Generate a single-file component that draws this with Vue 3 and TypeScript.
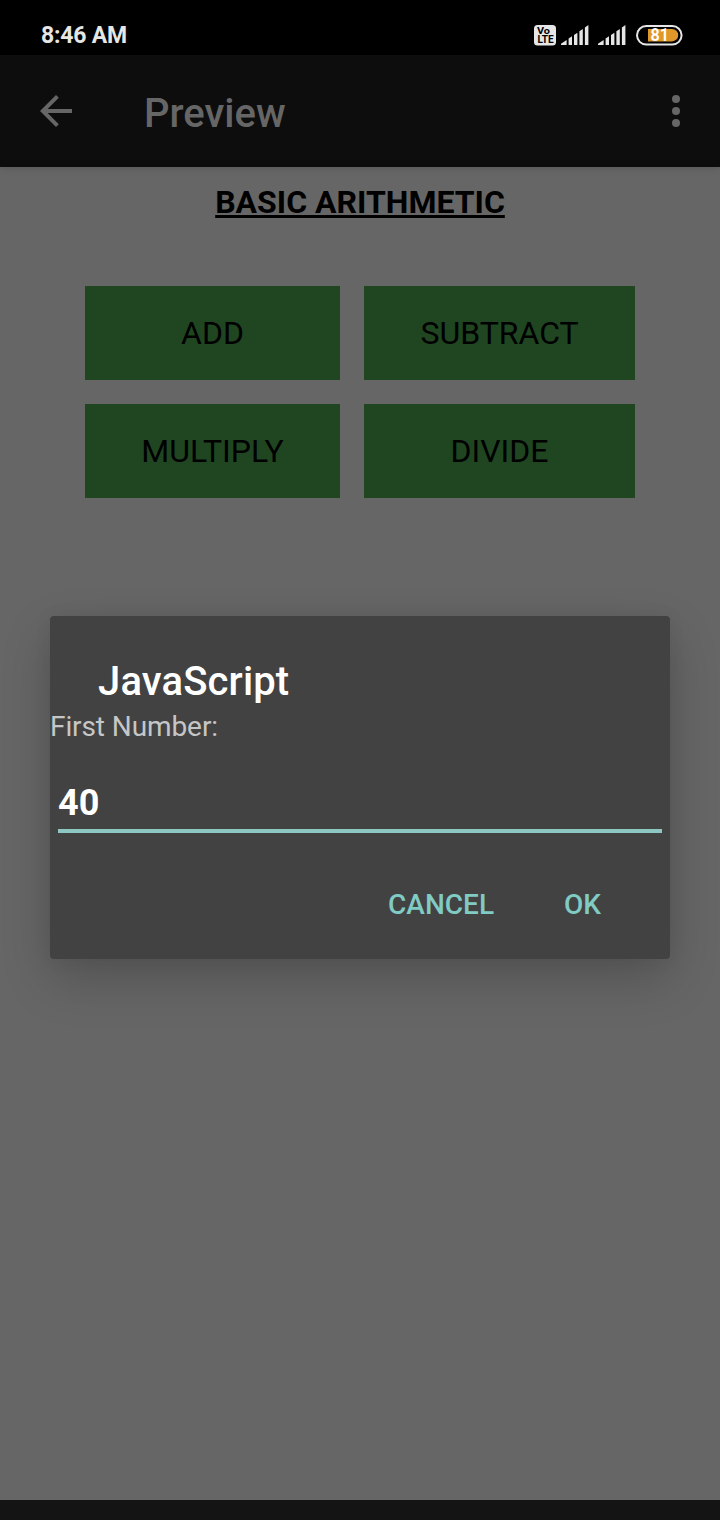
<script setup lang="ts">
import { ref } from 'vue'

const operations: string[] = ['ADD', 'SUBTRACT', 'MULTIPLY', 'DIVIDE']
const firstNumber = ref<string>('40')
const signalBars: string[] = [
  'M0 20V18.8L5.6 15V20Z',
  'M7.6 20V13.6L11 11.3V20Z',
  'M13 20V10L16.4 7.7V20Z',
  'M18.4 20V6.2L21.8 3.9V20Z',
  'M23.9 20V2.4L27.4 0V20Z',
]
</script>

<template>
  <div class="screen">
    <header class="status">
      <span class="time">8:46 AM</span>
      <div class="indicators">
        <svg class="volte" width="22" height="21" viewBox="0 0 22 21">
          <rect width="22" height="20.5" rx="3.5" fill="#e6e6e6" />
          <text x="3" y="9.2" font-size="9" textLength="13" lengthAdjust="spacingAndGlyphs">Vo</text>
          <text x="3.4" y="18.4" font-size="10" textLength="16.2" lengthAdjust="spacingAndGlyphs">LTE</text>
        </svg>
        <svg v-for="n in 2" :key="n" class="signal" width="28" height="20" viewBox="0 0 28 20">
          <path v-for="bar in signalBars" :key="bar" :d="bar" fill="#e6e6e6" />
        </svg>
        <svg class="battery" width="47" height="22" viewBox="0 0 47 22">
          <rect x="1" y="2" width="44.6" height="18.6" rx="9.3" fill="none" stroke="#e6e6e6" stroke-width="2" />
          <path d="M12 5H36a6.2 6.2 0 0 1 0 12.4H12Z" fill="#e0982a" />
          <text x="14.5" y="17.4" font-size="18" textLength="18.5" lengthAdjust="spacingAndGlyphs">81</text>
        </svg>
      </div>
    </header>

    <nav class="appbar">
      <svg class="back" width="32" height="32" viewBox="4 4 16 16">
        <path d="M20 11H7.83l5.59-5.59L12 4l-8 8 8 8 1.41-1.41L7.83 13H20v-2z" fill="#666" />
      </svg>
      <span class="title">Preview</span>
      <svg class="more" width="8" height="32" viewBox="0 0 8 32">
        <circle cx="4" cy="4" r="4" fill="#666" />
        <circle cx="4" cy="16" r="4" fill="#666" />
        <circle cx="4" cy="28" r="4" fill="#666" />
      </svg>
    </nav>

    <main class="page">
      <h1 class="heading">BASIC ARITHMETIC</h1>
      <div class="operations">
        <button v-for="name in operations" :key="name" class="operation">{{ name }}</button>
      </div>
    </main>

    <footer class="navbar"></footer>

    <section class="dialog">
      <h2 class="dialog-title">JavaScript</h2>
      <label class="message" for="prompt-value">First Number:</label>
      <input id="prompt-value" v-model="firstNumber" class="field" type="text" />
      <div class="actions">
        <button class="action">CANCEL</button>
        <button class="action">OK</button>
      </div>
    </section>
  </div>
</template>

<style>
body {
  margin: 0;
  background: #666;
}
</style>

<style scoped>
.screen {
  position: relative;
  display: flex;
  flex-direction: column;
  width: 720px;
  height: 1520px;
  overflow: hidden;
  background: #666;
  font-family: Roboto, "Liberation Sans", sans-serif;
}
button {
  margin: 0;
  border: 0;
  font-family: inherit;
}
.status {
  display: flex;
  justify-content: space-between;
  height: 55px;
  flex: none;
  box-sizing: border-box;
  padding: 21px 37px 0 41px;
  background: #000;
}
.time {
  margin-top: 1px;
  font-size: 23px;
  font-weight: 700;
  letter-spacing: -0.2px;
  line-height: 28px;
  color: #e6e6e6;
}
.indicators {
  display: flex;
  align-items: flex-start;
  padding-top: 4px;
}
.volte {
  font-weight: 700;
  fill: #000;
  margin-right: 5px;
}
.signal {
  margin-right: 9px;
}
.signal + .battery {
  margin-left: 1px;
}
.battery {
  font-weight: 600;
  fill: #fff;
  margin-top: -1px;
}
.appbar {
  position: relative;
  z-index: 1;
  display: flex;
  align-items: center;
  height: 112px;
  flex: none;
  box-sizing: border-box;
  padding: 0 40px;
  background: #0d0d0d;
  box-shadow: 0 2px 6px rgba(0, 0, 0, 0.12);
}
.title {
  flex: 1;
  margin: 6px 0 0 72px;
  font-size: 40px;
  font-weight: 500;
  line-height: 48px;
  color: #666;
}
.page {
  flex: 1;
}
.heading {
  margin: 0;
  padding-top: 16px;
  text-align: center;
  font-size: 32px;
  font-weight: 700;
  line-height: 38px;
  color: #000;
  text-decoration: underline;
  text-decoration-thickness: 3px;
  text-underline-offset: 2px;
  text-decoration-skip-ink: none;
}
.operations {
  display: grid;
  grid-template-columns: 255px 271px;
  grid-auto-rows: 94px;
  gap: 24px;
  width: 550px;
  margin: 65px auto 0;
}
.operation {
  padding: 0;
  background: #1f4621;
  color: #000;
  font-size: 32px;
  line-height: 38px;
}
.navbar {
  height: 20px;
  flex: none;
  background: #141414;
}
.dialog {
  position: absolute;
  z-index: 2;
  left: 50px;
  top: 616px;
  display: flex;
  flex-direction: column;
  width: 620px;
  height: 343px;
  box-sizing: border-box;
  padding-top: 42px;
  border-radius: 4px;
  background: #424242;
  box-shadow: 0 20px 50px rgba(0, 0, 0, 0.2), 0 0 18px rgba(0, 0, 0, 0.06);
}
.dialog-title {
  margin: 0 0 5px 48px;
  font-size: 40px;
  font-weight: 500;
  letter-spacing: 0.15px;
  line-height: 48px;
  color: #fff;
}
.message {
  font-size: 28px;
  letter-spacing: -0.09px;
  line-height: 32px;
  color: #c6c6c6;
}
.field {
  height: 55px;
  margin: 35px 8px 0;
  box-sizing: border-box;
  padding: 0 0 2px;
  border: 0;
  border-bottom: 4px solid #8cc7c1;
  border-radius: 0;
  outline: none;
  background: transparent;
  font: 700 36px / 42px Roboto, "Liberation Sans", sans-serif;
  color: #fff;
}
.actions {
  display: flex;
  justify-content: flex-end;
  gap: 70px;
  margin: 55px 69px 0 0;
}
.action {
  padding: 0;
  background: transparent;
  color: #80cbc4;
  font-size: 28px;
  font-weight: 500;
  line-height: 34px;
}
</style>
